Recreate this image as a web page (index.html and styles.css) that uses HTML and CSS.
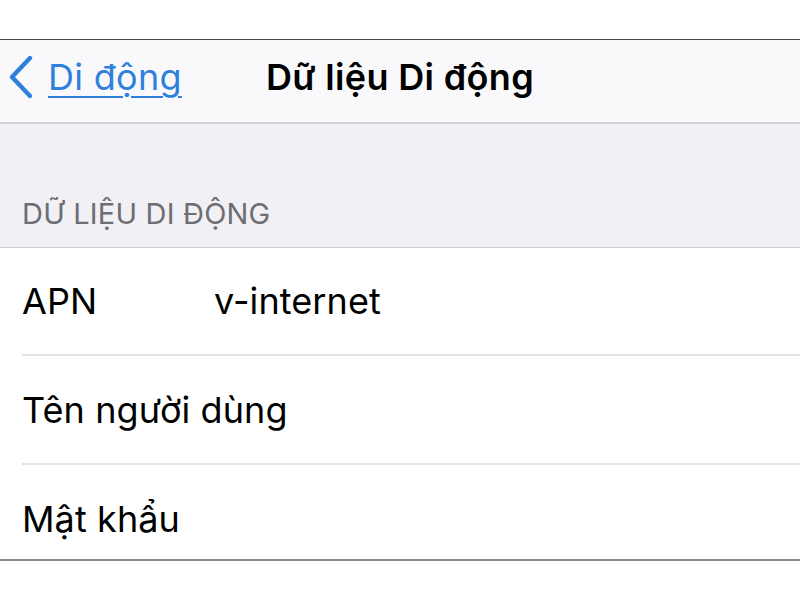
FILE: index.html
```html
<!DOCTYPE html>
<html lang="vi">
<head>
<meta charset="utf-8">
<link rel="stylesheet" href="styles.css">
</head>
<body>
<div class="screen">
  <div class="topgap"></div>
  <header class="navbar">
    <a class="back">
      <svg class="chev" width="28" height="44" viewBox="0 0 28 44"><path d="M24 3 L6 22 L24 41" fill="none" stroke="#2f7fdc" stroke-width="4.4" stroke-linecap="round" stroke-linejoin="round"/></svg>
      <span class="back-label">Di động</span>
    </a>
    <h1 class="title">Dữ liệu Di động</h1>
  </header>
  <section class="group">
    <div class="group-header">DỮ LIỆU DI ĐỘNG</div>
    <div class="list">
      <div class="row"><span class="label">APN</span><span class="value">v-internet</span></div>
      <div class="row"><span class="label">Tên người dùng</span></div>
      <div class="row last"><span class="label">Mật khẩu</span></div>
    </div>
  </section>
</div>
</body>
</html>
```
FILE: styles.css
```css
* { box-sizing: border-box; }
html, body { margin: 0; padding: 0; background: #fff; }
body { font-family: Inter, "Noto Sans", sans-serif; color: #000; }
.screen { width: 800px; height: 600px; overflow: hidden; background: #fff; }
.topgap { height: 40px; background: #fff; border-bottom: 1px solid #4a4a4a; }
.navbar {
  height: 84px;
  background: #f9f9fb;
  border-bottom: 2px solid #d3d3d7;
  display: flex;
  align-items: center;
  padding-bottom: 8px;
  position: relative;
}
.back { display: flex; align-items: center; gap: 14px; padding-left: 6px; color: #2f7fdc; }
.chev { display: block; }
.back-label { font-size: 36px; text-decoration: underline; text-underline-offset: 6px; text-decoration-thickness: 2px; letter-spacing: 0.3px; white-space: nowrap; }
.title {
  position: absolute; left: 0; right: 0; top: 0; bottom: 8px;
  margin: 0; display: flex; align-items: center; justify-content: center;
  font-size: 36px; font-weight: 600; pointer-events: none; white-space: nowrap;
  letter-spacing: 0.35px; padding-left: 0;
}
.group { background: #f0f0f5; }
.group-header {
  height: 124px; padding: 0 22px 16px;
  display: flex; align-items: flex-end;
  font-size: 29px; color: #6d6d72; letter-spacing: 0.2px;
  border-bottom: 1px solid #cfcfd3; white-space: nowrap;
}
.list { background: #fff; border-bottom: 2px solid #8a8a8a; }
.row {
  height: 108px; margin-left: 22px;
  display: flex; align-items: center;
  font-size: 36px; letter-spacing: 0.1px;
  border-bottom: 2px solid #e3e3e5;
  white-space: nowrap;
}
.row:nth-child(2) { height: 109px; }
.row.last { border-bottom: none; height: 94px; padding-top: 14px; }
.label { width: 192px; flex-shrink: 0; }
```
